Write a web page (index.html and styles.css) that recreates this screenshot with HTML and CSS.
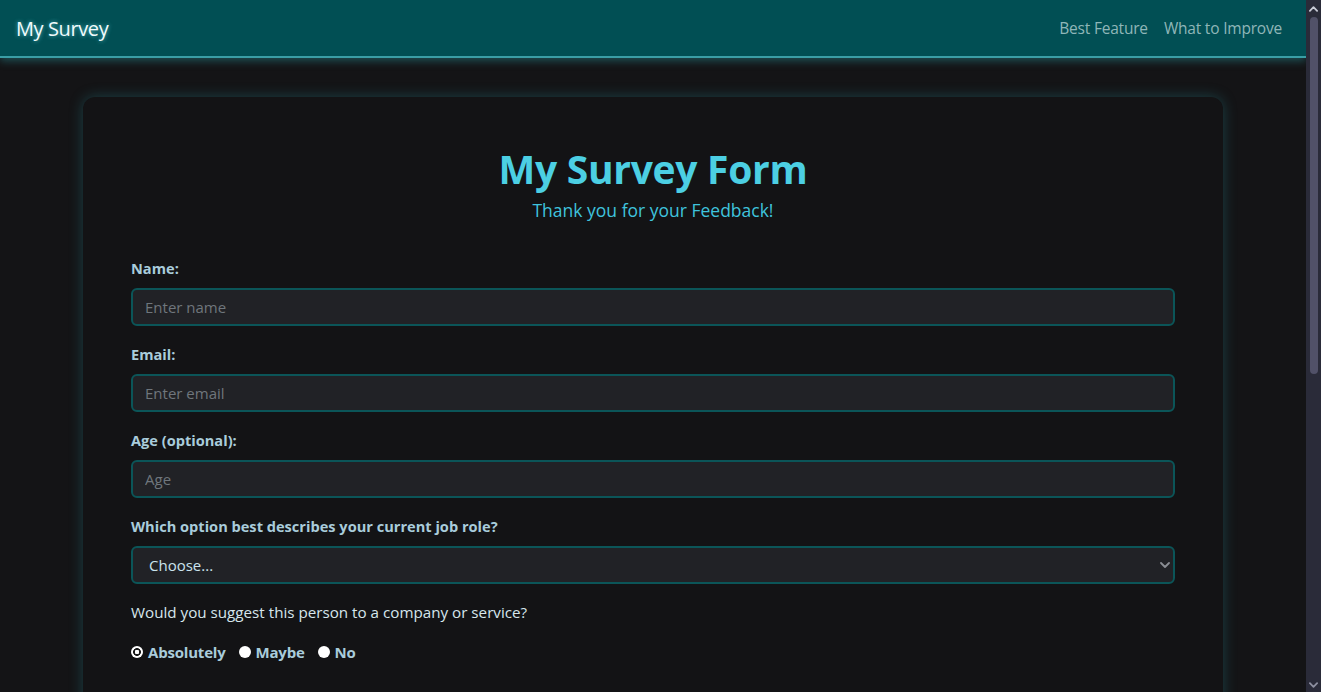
FILE: index.html
```html
<!DOCTYPE html>
<html lang="en">
<head>
<meta charset="utf-8">
<title>My Survey</title>
<link rel="stylesheet" href="styles.css">
</head>
<body>
<div class="page">
  <nav class="navbar">
    <a class="brand" href="#">My Survey</a>
    <div class="nav-links">
      <a href="#">Best Feature</a>
      <a href="#">What to Improve</a>
    </div>
  </nav>
  <main class="container">
    <section class="card">
      <header class="card-head">
        <h1 class="title">My Survey Form</h1>
        <p class="subtitle">Thank you for your Feedback!</p>
      </header>
      <form class="form">
        <div class="group">
          <label class="label" for="name">Name:</label>
          <input class="field" id="name" type="text" placeholder="Enter name">
        </div>
        <div class="group">
          <label class="label" for="email">Email:</label>
          <input class="field" id="email" type="email" placeholder="Enter email">
        </div>
        <div class="group">
          <label class="label" for="age">Age (optional):</label>
          <input class="field" id="age" type="text" placeholder="Age">
        </div>
        <div class="group">
          <label class="label" for="role">Which option best describes your current job role?</label>
          <div class="select-wrap">
            <select class="field select" id="role">
              <option>Choose...</option>
            </select>
            <svg class="chev" viewBox="0 0 10 6" width="10" height="6"><path d="M1 1l4 4 4-4" fill="none" stroke="#8a8d93" stroke-width="1.8" stroke-linecap="round" stroke-linejoin="round"/></svg>
          </div>
        </div>
        <p class="question">Would you suggest this person to a company or service?</p>
        <div class="radios">
          <label class="radio"><span class="dot checked"></span>Absolutely</label>
          <label class="radio"><span class="dot"></span>Maybe</label>
          <label class="radio"><span class="dot"></span>No</label>
        </div>
        <div class="spacer"></div>
      </form>
    </section>
  </main>
</div>
<div class="scrollbar" aria-hidden="true">
  <svg class="arrow" viewBox="0 0 10 6" width="9" height="6"><path d="M1 5l4-4 4 4" fill="none" stroke="#c9cbd6" stroke-width="2" stroke-linecap="round" stroke-linejoin="round"/></svg>
  <div class="thumb"></div>
  <div class="track-rest"></div>
  <svg class="arrow" viewBox="0 0 10 6" width="9" height="6"><path d="M1 1l4 4 4-4" fill="none" stroke="#8d8fa0" stroke-width="2" stroke-linecap="round" stroke-linejoin="round"/></svg>
</div>
</body>
</html>
```
FILE: styles.css
```css
* { box-sizing: border-box; }
html, body { margin: 0; padding: 0; }
body {
  background: #141416;
  font-family: "Open Sans", "Noto Sans", sans-serif;
  color: #cfe3ea;
  overflow: hidden;
}
.page {
  width: calc(100% - 15px);
}
.scrollbar {
  position: fixed;
  top: 0;
  right: 0;
  width: 15px;
  height: 100vh;
  background: #2a2b39;
  display: flex;
  flex-direction: column;
  align-items: center;
  padding: 6px 0 4px;
  z-index: 5;
}
.thumb {
  width: 8px;
  height: 357px;
  margin-top: 5px;
  background: #515168;
  border-radius: 4px;
}
.track-rest { flex: 1; }
.navbar {
  height: 58px;
  background: #014f54;
  border-bottom: 2px solid #3a9ea6;
  box-shadow: 0 3px 8px rgba(40, 150, 160, 0.45);
  display: flex;
  align-items: center;
  justify-content: space-between;
  padding: 0 24px 0 16px;
  position: relative;
  z-index: 2;
}
.brand {
  color: #f2fbfc;
  font-size: 20px;
  text-decoration: none;
  text-shadow: 0 0 4px rgba(120, 230, 240, 0.7);
  letter-spacing: -0.4px;
}
.nav-links { display: flex; gap: 16px; }
.nav-links a {
  color: #8fb6b8;
  font-size: 15.5px;
  text-decoration: none;
  letter-spacing: -0.2px;
}
.container {
  width: 1140px;
  margin: 39px auto 0;
}
.card {
  background: #131315;
  border-radius: 12px;
  box-shadow: 0 0 14px rgba(40, 150, 160, 0.35);
  padding: 48px 48px 0;
}
.card-head { text-align: center; margin-bottom: 32px; }
.title {
  margin: 0;
  font-size: 39px;
  line-height: 48px;
  font-weight: 700;
  color: #4ccfe3;
  letter-spacing: -0.3px;
}
.subtitle {
  margin: 4px 0 0;
  font-size: 17.5px;
  line-height: 27px;
  color: #3fc3dd;
}
.group { margin-bottom: 16px; }
.label {
  display: block;
  font-size: 14.6px;
  line-height: 24px;
  font-weight: 700;
  color: #a9ccdb;
  margin-bottom: 8px;
}
.field {
  display: block;
  width: 100%;
  height: 38px;
  background: #212226;
  border: 2px solid #0b5558;
  border-radius: 6px;
  padding: 0 12px;
  font-family: inherit;
  font-size: 15px;
  color: #cfe3ea;
  outline: none;
}
.field::placeholder { color: #6f767c; }
.select-wrap { position: relative; }
.select {
  appearance: none;
  -webkit-appearance: none;
  padding-left: 16px;
  color: #cbe4ee;
}
.chev {
  position: absolute;
  right: 5px;
  top: 16px;
}
.question {
  margin: 16px 0 18px;
  font-size: 15.2px;
  line-height: 24px;
  color: #d6e6ec;
}
.radios { display: flex; gap: 13px; }
.radio {
  display: flex;
  align-items: center;
  gap: 5px;
  font-size: 15px;
  font-weight: 700;
  color: #a9ccdb;
  letter-spacing: -0.2px;
}
.dot {
  width: 12px;
  height: 12px;
  border-radius: 50%;
  background: #fff;
  display: inline-block;
}
.dot.checked {
  background: radial-gradient(circle, #fff 0 2px, #1a1a1a 2.5px 3.6px, #fff 4.2px);
}
.spacer { height: 200px; }
```
